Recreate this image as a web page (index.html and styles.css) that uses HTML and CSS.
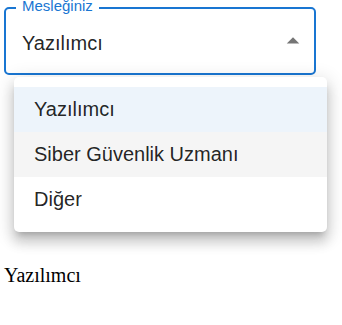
FILE: index.html
```html
<!DOCTYPE html>
<html lang="tr">
  <head>
    <meta charset="UTF-8" />
    <meta name="viewport" content="width=device-width, initial-scale=1.0" />
    <title>Meslek Seçimi</title>
    <link rel="stylesheet" href="styles.css">
  </head>
  <body>
    <div class="page">
      <div class="field">
        <div class="select">
          <span class="value">Yazılımcı</span>
          <svg class="arrow" viewBox="0 0 24 24" width="30" height="30">
            <path d="M7 14l5-5 5 5z" />
          </svg>
        </div>
        <span class="label">Mesleğiniz</span>

        <ul class="menu">
          <li class="option selected">Yazılımcı</li>
          <li class="option hovered">Siber Güvenlik Uzmanı</li>
          <li class="option">Diğer</li>
        </ul>
      </div>

      <p class="result">Yazılımcı</p>
    </div>
  </body>
</html>
```

FILE: styles.css
```css
/* ---- BASIC ---- */
* {
  box-sizing: border-box;
}

body {
  margin: 0;
  background: #ffffff;
}

.page {
  padding: 7px 4px 0;
}

/* ---- SELECT FIELD ---- */
.field {
  position: relative;
  width: 312px;
  height: 68px;
  border: 2px solid #1976d2;
  border-radius: 5px;
  font-family: "Liberation Sans", Arial, sans-serif;
}

.select {
  display: flex;
  align-items: center;
  height: 100%;
  padding-left: 16px;
  padding-right: 6px;
}

.value {
  display: block;
  padding-top: 4px;
  font-size: 20px;
  color: rgba(0, 0, 0, 0.87);
}

.arrow {
  margin-left: auto;
  fill: rgba(0, 0, 0, 0.54);
}

.label {
  position: absolute;
  top: -9px;
  left: 10px;
  padding: 0 6px;
  background: #ffffff;
  font-size: 15px;
  line-height: 12px;
  color: #1976d2;
}

/* ---- MENU ---- */
.menu {
  position: absolute;
  top: 68px;
  left: 8px;
  width: 313px;
  margin: 0;
  padding: 10px 0;
  list-style: none;

  background: #ffffff;
  border-radius: 5px;
  box-shadow: 0px 6px 6px -4px rgba(0, 0, 0, 0.2),
    0px 10px 12px 1px rgba(0, 0, 0, 0.14),
    0px 4px 18px 3px rgba(0, 0, 0, 0.12);
  z-index: 2;
}

.option {
  display: flex;
  align-items: center;
  height: 45px;
  padding-left: 20px;
  font-size: 20px;
  color: rgba(0, 0, 0, 0.87);
}

.option.selected {
  background: rgba(25, 118, 210, 0.08);
}

.option.hovered {
  background: rgba(0, 0, 0, 0.04);
}

/* ---- RESULT ---- */
.result {
  margin: 189px 0 0;
  font-family: "Liberation Serif", serif;
  font-size: 20px;
}
```
